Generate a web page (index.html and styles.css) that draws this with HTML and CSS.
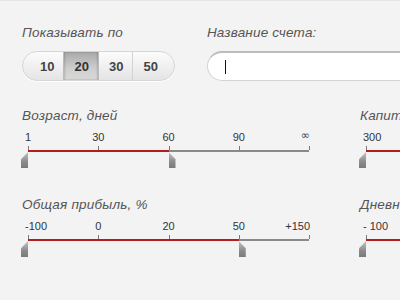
FILE: index.html
```html
<!DOCTYPE html>
<html lang="ru">

<head>
    <meta charset="UTF-8">
    <meta name="viewport" content="width=device-width, initial-scale=1.0">
    <title>Фильтр счетов</title>
    <link rel="stylesheet" href="styles.css">
</head>

<body>
    <div class="page">
        <div class="top">
            <div class="field">
                <div class="label">Показывать по</div>
                <div class="pager">
                    <button class="page-btn">10</button>
                    <button class="page-btn active">20</button>
                    <button class="page-btn">30</button>
                    <button class="page-btn">50</button>
                </div>
            </div>
            <div class="field">
                <div class="label">Название счета:</div>
                <div class="text-input"><span class="caret"></span></div>
            </div>
        </div>

        <div class="sliders">
            <div class="slider">
                <div class="label">Возраст, дней</div>
                <div class="scale">
                    <span class="mark first" style="left: 0%">1</span>
                    <span class="mark" style="left: 25%">30</span>
                    <span class="mark" style="left: 50%">60</span>
                    <span class="mark" style="left: 75%">90</span>
                    <span class="mark last inf" style="left: 100%">∞</span>
                </div>
                <div class="track">
                    <span class="tick" style="left: 0%"></span>
                    <span class="tick" style="left: 25%"></span>
                    <span class="tick" style="left: 50%"></span>
                    <span class="tick" style="left: 75%"></span>
                    <span class="tick" style="left: 100%"></span>
                    <div class="fill" style="left: 0%; width: 50%"></div>
                    <span class="handle from" style="left: 0%"></span>
                    <span class="handle to" style="left: 50%"></span>
                </div>
            </div>

            <div class="slider">
                <div class="label">Капитал, $</div>
                <div class="scale">
                    <span class="mark first" style="left: 0%">300</span>
                    <span class="mark" style="left: 25%">1 000</span>
                    <span class="mark" style="left: 50%">5 000</span>
                    <span class="mark" style="left: 75%">10 000</span>
                    <span class="mark last inf" style="left: 100%">∞</span>
                </div>
                <div class="track">
                    <span class="tick" style="left: 0%"></span>
                    <span class="tick" style="left: 25%"></span>
                    <span class="tick" style="left: 50%"></span>
                    <span class="tick" style="left: 75%"></span>
                    <span class="tick" style="left: 100%"></span>
                    <div class="fill" style="left: 0%; width: 75%"></div>
                    <span class="handle from" style="left: 0%"></span>
                    <span class="handle to" style="left: 75%"></span>
                </div>
            </div>

            <div class="slider">
                <div class="label">Общая прибыль, %</div>
                <div class="scale">
                    <span class="mark first" style="left: 0%">-100</span>
                    <span class="mark" style="left: 25%">0</span>
                    <span class="mark" style="left: 50%">20</span>
                    <span class="mark" style="left: 75%">50</span>
                    <span class="mark last" style="left: 100%">+150</span>
                </div>
                <div class="track">
                    <span class="tick" style="left: 0%"></span>
                    <span class="tick" style="left: 25%"></span>
                    <span class="tick" style="left: 50%"></span>
                    <span class="tick" style="left: 75%"></span>
                    <span class="tick" style="left: 100%"></span>
                    <div class="fill" style="left: 0%; width: 75%"></div>
                    <span class="handle from" style="left: 0%"></span>
                    <span class="handle to" style="left: 75%"></span>
                </div>
            </div>

            <div class="slider">
                <div class="label">Дневная прибыль, %</div>
                <div class="scale">
                    <span class="mark first" style="left: 0%">- 100</span>
                    <span class="mark" style="left: 25%">0</span>
                    <span class="mark" style="left: 50%">5</span>
                    <span class="mark" style="left: 75%">10</span>
                    <span class="mark last" style="left: 100%">+50</span>
                </div>
                <div class="track">
                    <span class="tick" style="left: 0%"></span>
                    <span class="tick" style="left: 25%"></span>
                    <span class="tick" style="left: 50%"></span>
                    <span class="tick" style="left: 75%"></span>
                    <span class="tick" style="left: 100%"></span>
                    <div class="fill" style="left: 0%; width: 50%"></div>
                    <span class="handle from" style="left: 0%"></span>
                    <span class="handle to" style="left: 50%"></span>
                </div>
            </div>
        </div>
    </div>
</body>

</html>
```

FILE: styles.css
```css
html {
    overflow: hidden;
}

body {
    margin: 0;
    min-height: 100vh;
    font-family: "Liberation Sans", Arial, sans-serif;
    background-color: #f3f3f3;
    border-top: 1px solid #e6e6e6;
    color: #333;
}

.page {
    padding: 24px 0 0 22px;
    width: 700px;
}

.label {
    font-size: 13.5px;
    line-height: 16px;
    letter-spacing: 0.2px;
    font-style: italic;
    color: #555;
    white-space: nowrap;
}

/* top row */

.top {
    display: flex;
    gap: 32px;
}

.field .label {
    margin-bottom: 10px;
}

.pager {
    display: flex;
    height: 30px;
    box-sizing: border-box;
    border: 1px solid #d6d6d6;
    border-radius: 15px;
    overflow: hidden;
    background: linear-gradient(#fcfcfc, #e4e4e4);
    box-shadow: 0 1px 0 #fff;
}

.page-btn {
    font-family: inherit;
    font-size: 13px;
    font-weight: bold;
    color: #444;
    padding: 0 9px 0 10px;
    border: none;
    border-left: 1px solid #d2d2d2;
    background: transparent;
    cursor: pointer;
}

.page-btn:first-child {
    border-left: none;
    padding-left: 17px;
}

.page-btn:last-child {
    padding-right: 16px;
}

.page-btn.active {
    color: #333;
    background: linear-gradient(#a9a9a9, #cfcfcf 60%, #d9d9d9);
    box-shadow: inset 1px 0 2px rgba(0, 0, 0, 0.15), inset -1px 0 2px rgba(0, 0, 0, 0.15);
    border-left-color: #bbb;
}

.page-btn.active + .page-btn {
    border-left-color: #bbb;
}

.text-input {
    width: 260px;
    height: 30px;
    box-sizing: border-box;
    display: flex;
    align-items: center;
    padding-left: 17px;
    background: #fff;
    border: 1px solid #d4d4d4;
    border-top: 2px solid #bcbcbc;
    border-radius: 15px;
}

.caret {
    width: 1px;
    height: 14px;
    background: #111;
}

/* range sliders */

.sliders {
    display: grid;
    grid-template-columns: 310px 310px;
    column-gap: 28px;
    row-gap: 45px;
    margin-top: 27px;
}

.slider {
    padding-left: 6px;
}

.slider .label {
    margin-left: -6px;
}

.scale {
    position: relative;
    width: 281px;
    height: 13px;
    margin-top: 7px;
    font-size: 11px;
    line-height: 13px;
    color: #333;
}

.mark {
    position: absolute;
    top: 0;
    white-space: nowrap;
    transform: translateX(-50%);
}

.mark.first {
    transform: none;
    margin-left: -3px;
}

.mark.last {
    transform: translateX(-100%);
    margin-left: 1px;
}

.mark.inf {
    font-family: "DejaVu Sans", sans-serif;
    font-size: 11px;
    line-height: 9px;
    color: #444;
}

.track {
    position: relative;
    width: 281px;
    height: 2px;
    margin-top: 6px;
    background: #8a8a8a;
}

.tick {
    position: absolute;
    bottom: 100%;
    width: 1px;
    height: 4px;
    background: #7a7a7a;
}

.fill {
    position: absolute;
    top: 0;
    height: 2px;
    background: #b01e1e;
}

.handle {
    position: absolute;
    top: 100%;
    width: 7px;
    height: 16px;
    background: linear-gradient(#c4c4c4, #8c8c8c 60%, #7a7a7a);
}

.handle.from {
    margin-left: -7px;
    clip-path: polygon(100% 0, 100% 100%, 0 100%, 0 45%);
}

.handle.to {
    clip-path: polygon(0 0, 100% 45%, 100% 100%, 0 100%);
}
```
